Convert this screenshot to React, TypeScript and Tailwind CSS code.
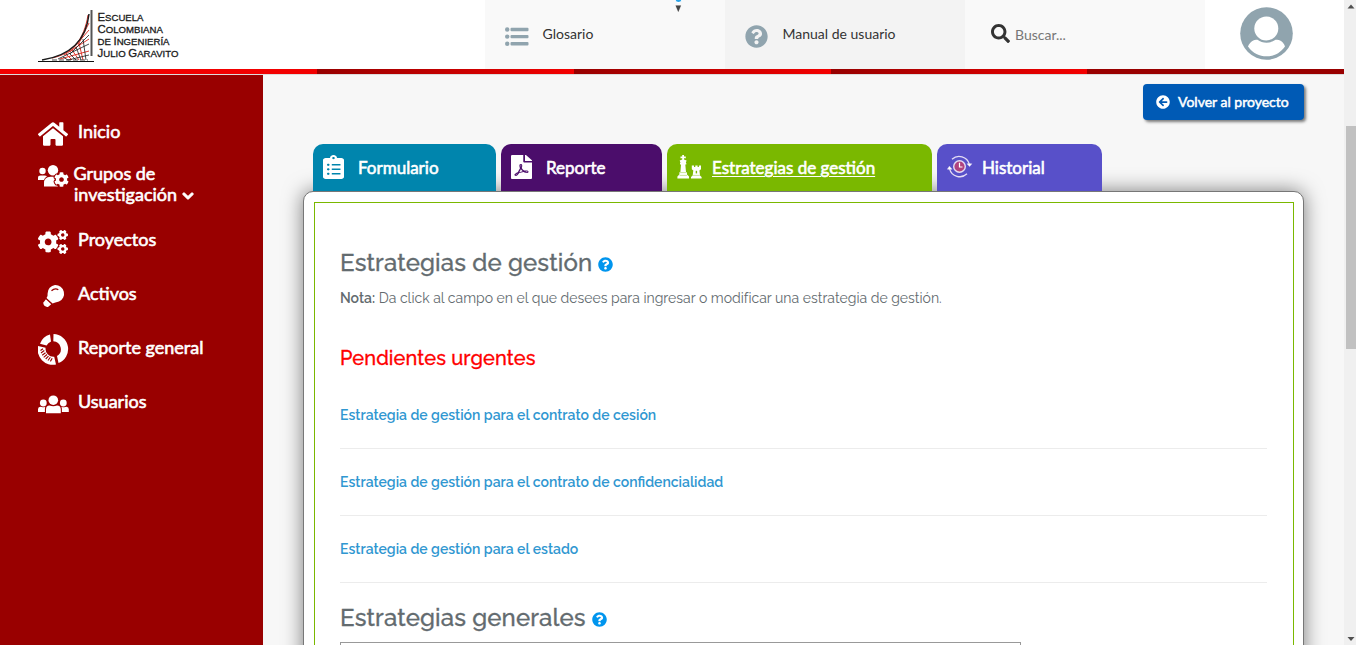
import type { ReactNode } from "react";
import {
  FaArrowCircleLeft,
  FaChevronDown,
  FaClipboardList,
  FaCog,
  FaCogs,
  FaFilePdf,
  FaHome,
  FaQuestionCircle,
  FaSearch,
} from "react-icons/fa";

function LogoLine({ words }: { words: string[] }) {
  return (
    <span className="block h-[12px] whitespace-pre">
      {words.map((w, i) => (
        <span key={i}>
          {i > 0 && " "}
          <span className="text-[11.4px]">{w[0]}</span>
          {w.slice(1)}
        </span>
      ))}
    </span>
  );
}

function Logo() {
  return (
    <div className="ml-[38px] flex w-[447px] pt-[10px]">
      <svg width="57" height="53" viewBox="0 0 57 53" fill="none">
        <g stroke="#e0392f" strokeWidth="1">
          <path d="M14 48 C34 44 46 30 50 5" />
          <path d="M26 45 L51 29 M32 42 L51 20 M22 49 L51 41 M40 35 L51 13" />
          <path d="M34 40 L41 50 M41 33 L45 50 M28 44 L34 50" />
        </g>
        <g stroke="#1c1c1c" strokeWidth="0.8">
          <path d="M4 50 C30 46 48 32 51 4" strokeWidth="1.5" />
          <path d="M20 49 L51 34 M32 44 L51 25 M30 50 L51 45" />
          <path d="M25 47 L30 50 M31 43 L38 50 M38 37 L43 50 M45 29 L48 50" />
          <path d="M14 50 H50" strokeDasharray="5 2" />
        </g>
        <path d="M53.5 0 V46" stroke="#555" strokeWidth="2" />
        <path d="M0 51.5 H56" stroke="#111" strokeWidth="1" />
      </svg>
      <div className="ml-[2.5px] flex flex-col font-['Liberation_Sans',sans-serif] text-[9.6px] leading-[14px] text-[#1a1a1a] uppercase [-webkit-text-stroke:0.3px_#1a1a1a]">
        <LogoLine words={["Escuela"]} />
        <LogoLine words={["Colombiana"]} />
        <span className="block h-[12px] whitespace-pre">
          de <span className="text-[11.4px]">I</span>ngeniería
        </span>
        <LogoLine words={["Julio", "Garavito"]} />
      </div>
    </div>
  );
}

function Avatar() {
  return (
    <svg width="53" height="53" viewBox="0 0 53 53">
      <circle cx="26.5" cy="26.5" r="26.3" fill="#90a4ae" />
      <circle cx="26.3" cy="21.5" r="12" fill="#fff" />
      <path d="M8 39.5 C10 34.5 13.5 32.7 17.5 32.7 C22.5 36.7 30.5 36.7 35.5 32.7 C40 32.7 43.5 34.5 45 39.5 C40 46.5 33.5 49.3 26.5 49.3 S13 46.5 8 39.5 Z" fill="#fff" />
    </svg>
  );
}

function TeamGear() {
  return (
    <span className="relative block h-[22px] w-[31px]">
      <svg width="31" height="22" viewBox="0 0 31 22" fill="#fff">
        <circle cx="4.5" cy="6" r="3.2" />
        <circle cx="15" cy="5.2" r="5.2" />
        <path d="M0 15 V13 Q0 10.6 2.6 10.6 H6.5 Q8.3 10.6 9 11.3 Q6.5 12.8 6 15 Z" />
        <path d="M6 21.5 V18.5 Q6 11.8 12.5 11.8 H15.5 L17 13 L16 17 L20 21.5 Z" />
      </svg>
      <FaCog size={15} className="absolute top-[6.5px] left-[15.5px] overflow-visible text-white [paint-order:stroke] [stroke-width:70] [stroke:#990000]" />
    </span>
  );
}

function Bulb() {
  return (
    <svg width="31" height="24" viewBox="0 0 31 24">
      <path d="M17 1 A8.7 8.7 0 0 1 21 17.6 Q17 18.5 14.5 19.5 L8.5 14 Q10 12 9.6 9.5 A8.6 8.6 0 0 1 17 1Z" fill="#fff" />
      <path d="M8 15.3 L13.2 20.2 L10 23 Q8 23.4 6.3 21.6 Q4.9 20 5.4 18.4 Z" fill="#fff" />
      <path d="M7.8 14.3 L14.4 20.2" stroke="#990000" strokeWidth="0.9" />
      <path d="M13.5 6.8 Q17 3.6 20.3 5.8" fill="none" stroke="#990000" strokeWidth="1.3" />
    </svg>
  );
}

function Donut() {
  return (
    <svg width="31" height="31" viewBox="0 0 31 31">
      <path d="M15.5 0 A15 15 0 0 1 20.5 29 L19 22 A8 8 0 0 0 15.3 7.2 Z" fill="#fff" />
      <path d="M2 9.7 A15 15 0 0 1 12 0.6 L13 7.4 A8 8 0 0 0 8.6 11.6 Z" fill="#fff" />
      <path d="M0 12 L7.6 13.7 A8 8 0 0 0 16.2 22.8 L18 30.5 A15.3 15.3 0 0 1 0 12 Z" fill="#fff" />
      <path
        d="M2.5 16.5 L5 14.7 M3 19 L6.3 16.5 M4.2 21.3 L7.5 18.7 M5.7 23.3 L9 20.5 M7.7 25 L10.5 22.2 M10 26.5 L12.3 23.3 M12.4 27.4 L14.2 24.3"
        stroke="#990000"
        strokeWidth="1.1"
      />
    </svg>
  );
}

function People() {
  return (
    <svg width="31" height="19" viewBox="0 0 31 19" fill="#fff">
      <circle cx="15.3" cy="5.2" r="4.8" />
      <circle cx="5.3" cy="8" r="3.4" />
      <circle cx="25.3" cy="8" r="3.4" />
      <path d="M8 18.3 V14.5 Q8 10.5 11.5 10.5 Q15.3 12 19 10.5 Q22.8 10.5 22.8 14.5 V18.3 Z" />
      <path d="M0 17 V14.3 Q0 11.8 2.3 11.8 Q5 12.7 7.3 11.7 Q6.9 13 6.9 14.5 V17Z" />
      <path d="M30.8 17 V14.3 Q30.8 11.8 28.4 11.8 Q26 12.7 23.4 11.7 Q23.9 13 23.9 14.5 V17Z" />
    </svg>
  );
}

function ListIcon() {
  return (
    <svg width="24" height="20" viewBox="0 0 24 20" fill="#90a4ae">
      {[2.5, 9.6, 16.8].map((y) => (
        <g key={y}>
          <circle cx="2.2" cy={y} r="2.2" />
          <rect x="5.5" y={y - 1.7} width="18" height="3.4" rx="1" />
        </g>
      ))}
    </svg>
  );
}

function ChessPieces() {
  return (
    <svg width="25" height="24" viewBox="0 0 25 24" fill="#fff">
      <path d="M5.2 0 H7 V1.6 H8.8 V3.2 H7 V4.6 L9.6 5.6 L8.8 8 H9.3 V9.6 H8.3 L9 17 H10 V19.4 L12 21.6 V23.6 H0.4 V21.6 L2.4 19.4 V17 H3.4 L4 9.6 H3 V8 H3.5 L2.7 5.6 L5.2 4.6 V3.2 H3.5 V1.6 H5.2 Z" />
      <path d="M14.8 10.4 H17 V12 H18.3 V10.4 H20.6 V12 H21.9 V10.4 H24 V14.2 L22.4 15.4 L23 20.4 L24.6 22 V23.6 H14 V22 L15.7 20.4 L16.3 15.4 L14.8 14.2 Z" />
      <path d="M18.7 15.8 H20.1 V18.4 H18.7 Z" fill="#7ab800" />
      <path d="M2.5 17.6 H10 M2.6 20.4 H10 M16 20.4 H22.8" stroke="#7ab800" strokeWidth="0.4" />
    </svg>
  );
}

function ClockCycle() {
  return (
    <svg width="26" height="24" viewBox="0 0 26 24" fill="none" stroke="#e4dcf5">
      <circle cx="12.5" cy="11.5" r="5.8" fill="#b0437f" strokeWidth="1.4" />
      <path d="M12.5 7.8 V12 H15.5" stroke="#fff" strokeWidth="1.2" />
      <path d="M5 4.2 A10.5 10.5 0 0 1 22.3 9.2 M20 18.8 A10.5 10.5 0 0 1 2.6 13.8" strokeWidth="1.3" />
      <path d="M20 8.8 H24.8 L22.6 11.5 Z M0.4 14.2 H5 L2.4 11.2 Z" fill="#fff" strokeWidth="0.5" />
    </svg>
  );
}

function NavItem({ icon, label }: { icon: ReactNode; label: string }) {
  return (
    <a className="flex h-[54px]">
      <span className="flex h-[31px] w-[40px] items-center">{icon}</span>
      <span className="text-[18px] leading-[27px]">{label}</span>
    </a>
  );
}

function Tab({ icon, label, className, active }: { icon: ReactNode; label: string; className: string; active?: boolean }) {
  return (
    <a className={`flex h-[47px] items-center rounded-t-[10px] pl-[10px] text-[17px] text-white [-webkit-text-stroke:0.6px_white] ${className}`}>
      <span className="flex h-full w-[35px] items-center pb-[2px]">{icon}</span>
      <span className={active ? "underline decoration-1 underline-offset-2" : ""}>{label}</span>
    </a>
  );
}

function Heading({ children }: { children: ReactNode }) {
  return (
    <h2 className="flex items-center text-[24px] leading-[29px] font-medium tracking-[0.13px] text-[#636b6f] [-webkit-text-stroke:0.3px_#636b6f]">
      {children}
      <FaQuestionCircle size={15} className="mt-[3px] ml-[6px] text-[#0095ee]" />
    </h2>
  );
}

const pending = [
  "Estrategia de gestión para el contrato de cesión",
  "Estrategia de gestión para el contrato de confidencialidad",
  "Estrategia de gestión para el estado",
];

export default function App() {
  return (
    <div className="relative flex h-[645px] w-[1356px] overflow-hidden bg-[#f7f7f7] font-['Lato',sans-serif]">
      <div className="flex w-[1344px] flex-col">
        <header className="flex h-[69px] shrink-0 bg-white text-[14px] text-[#333]">
          <Logo />
          <a className="flex w-[240px] bg-[#f9f9f9] pl-[20px]">
            <span className="mt-[27px] w-[37.5px]"><ListIcon /></span>
            <span className="mt-[24px] leading-[20px]">Glosario</span>
          </a>
          <a className="flex w-[240px] bg-[#f3f3f3] pl-[20px]">
            <span className="mt-[25px] w-[37.5px]"><FaQuestionCircle size={23} className="text-[#90a4ae]" /></span>
            <span className="mt-[24px] leading-[20px]">Manual de usuario</span>
          </a>
          <div className="flex w-[240px] bg-[#f9f9f9] pl-[26px]">
            <FaSearch size={19} className="mt-[24px] mr-[5px]" />
            <span className="mt-[25px] leading-[20px] text-[#777]">Buscar...</span>
          </div>
          <div className="mt-[7px] ml-[35px] pl-[0.4px]"><Avatar /></div>
        </header>
        <div className="flex h-[6px] shrink-0 border-b border-[#dcdcdc]">
          <div className="w-[317px] bg-[#f20000]" />
          <div className="w-[257px] bg-linear-to-r from-[#960000] to-[#f50000]" />
          <div className="w-[257px] bg-linear-to-r from-[#960000] to-[#f50000]" />
          <div className="w-[256px] bg-linear-to-r from-[#960000] to-[#f50000]" />
          <div className="w-[257px] bg-[#990000]" />
        </div>

        <div className="flex h-[570px]">
          <nav className="flex w-[263px] shrink-0 flex-col bg-[#990000] pt-[43px] pl-[38px] text-white [-webkit-text-stroke:0.6px_white]">
            <NavItem icon={<FaHome size={30} />} label="Inicio" />
            <a className="-mt-[9px] flex h-[63px]">
              <span className="mt-[2px] w-[35.5px]"><TeamGear /></span>
              <span className="text-[18px] leading-[21px]">
                Grupos de<br />
                <span className="flex items-center pl-[0.5px]">
                  investigación
                  <FaChevronDown size={12} className="mt-[2px] ml-[5px] overflow-visible [stroke-width:50] [stroke:white]" />
                </span>
              </span>
            </a>
            <NavItem icon={<FaCogs size={30} />} label="Proyectos" />
            <NavItem icon={<Bulb />} label="Activos" />
            <NavItem icon={<Donut />} label="Reporte general" />
            <NavItem icon={<div className="pt-[2px]"><People /></div>} label="Usuarios" />
          </nav>

          <main className="flex flex-1 flex-col pr-[40px] pl-[40px]">
            <a className="mt-[9px] flex h-[36px] w-[161px] shrink-0 items-center self-end rounded-[4px] bg-[#005ab5] pl-[13px] text-[14px] text-white shadow-[2px_2px_3px_rgba(0,0,0,0.5)]">
              <FaArrowCircleLeft size={14} className="mr-[8px]" />
              <span className="pb-[2px] [-webkit-text-stroke:0.5px_white]">Volver al proyecto</span>
            </a>
            <div className="relative z-10 mt-[24px] flex h-[47px] shrink-0 gap-[5px] pl-[10px]">
              <Tab className="w-[183px] bg-[#0085ad]" icon={<FaClipboardList className="h-[24px] w-[21px]" preserveAspectRatio="none" />} label="Formulario" />
              <Tab className="w-[161px] bg-[#4b0d6b]" icon={<FaFilePdf className="h-[24px] w-[21px]" preserveAspectRatio="none" />} label="Reporte" />
              <Tab className="w-[265px] bg-[#7ab800]" icon={<ChessPieces />} label="Estrategias de gestión" active />
              <Tab className="w-[165px] bg-[#5850c9]" icon={<ClockCycle />} label="Historial" />
            </div>
            <section className="h-[484px] w-[1001px] shrink-0 rounded-[10px] border border-[#777] bg-white p-[10px] pr-[9px] pb-0 shadow-[0_0_20px_rgba(0,0,0,0.5)]">
              <div className="h-full border border-[#7ab800] pt-[45px] pr-[26px] pl-[25px] font-['Raleway',sans-serif]">
                <Heading>Estrategias de gestión</Heading>
                <p className="mt-[11px] text-[14px] leading-[20px] tracking-[0.01px] text-[#636b6f]">
                  <span className="font-semibold">Nota:</span> Da click al campo en el que desees para ingresar o modificar una estrategia de gestión.
                </p>
                <h3 className="mt-[38px] text-[20px] leading-[24px] font-medium tracking-[0.1px] text-[#ff0000] [-webkit-text-stroke:0.3px_#ff0000]">Pendientes urgentes</h3>
                <div className="mt-[12px]">
                  {pending.map((p) => (
                    <a key={p} className="flex h-[67px] items-center border-b border-[#ececec] text-[14px] font-semibold text-[#3097d1]">
                      {p}
                    </a>
                  ))}
                </div>
                <div className="mt-[20px]"><Heading>Estrategias generales</Heading></div>
                <div className="mt-[10px] h-[34px] w-[681px] border border-[#999]" />
              </div>
            </section>
          </main>
        </div>
      </div>

      <div className="flex w-[12px] flex-col bg-[#f0f0f0]">
        <svg width="12" height="12" viewBox="0 0 12 12"><path d="M3.5 8.5 L7 4.5 L10.5 8.5Z" fill="#505050" /></svg>
        <div className="mt-[114px] ml-[2px] h-[223px] bg-[#c1c1c1]" />
        <svg className="mt-auto" width="12" height="12" viewBox="0 0 12 12"><path d="M3.5 4 H10.5 L7 8Z" fill="#505050" /></svg>
      </div>

      <svg className="absolute top-0 left-[670px]" width="17" height="16" viewBox="0 0 17 16">
        <circle cx="8.5" cy="-1" r="3.6" fill="#29a3e8" stroke="#fff" strokeWidth="1.2" />
        <path d="M5.6 5.5 H11 L8.3 12Z" fill="#444" stroke="#e4e4e4" strokeWidth="1" paintOrder="stroke" />
      </svg>
    </div>
  );
}
